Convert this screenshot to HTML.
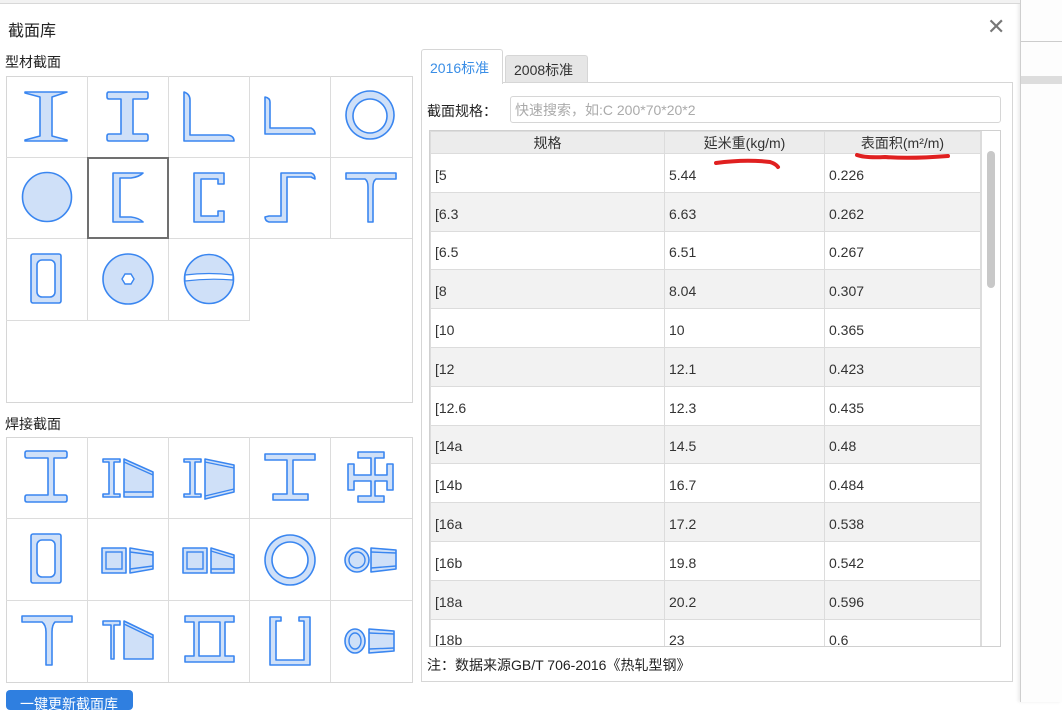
<!DOCTYPE html>
<html><head><meta charset="utf-8"><style>
*{margin:0;padding:0;box-sizing:border-box}
body{width:1062px;height:702px;overflow:hidden;background:#fff;font-family:"Liberation Sans","Noto Sans CJK SC",sans-serif;position:relative;color:#333}
.abs{position:absolute}
.outer{left:1020px;top:0;width:42px;height:702px;background:#fdfdfd;border-left:1px solid #cfcfcf;box-shadow:-2px 0 3px rgba(0,0,0,.08)}
.t{font-size:13px;color:#222}
table{border-collapse:collapse;font-size:14px}
td{border:1px solid #dcdcdc;padding:0 4px;height:38.8px;vertical-align:bottom;padding-bottom:9px}
tr:nth-child(odd) td{background:#f2f2f2}
svg .s{fill:#cfe0f8;stroke:#3a86f0;stroke-width:1.6;stroke-linejoin:round}
svg .l{fill:none;stroke:#3a86f0;stroke-width:1.4}
</style></head><body>
<div class="abs outer"></div>
<div class="abs" style="left:1021px;top:41px;width:41px;height:1px;background:#ccc"></div>
<div class="abs" style="left:1021px;top:76px;width:41px;height:8px;background:#ddd"></div>
<div class="abs" style="left:0;top:0;width:1020px;height:4px;background:#f2f2f2;border-bottom:1px solid #d8d8d8"></div>
<div class="abs" style="left:8px;top:17px;font-size:16px;color:#222">截面库</div>
<div class="abs" style="left:987px;top:16px;font-size:22px;color:#777;line-height:22px">✕</div>
<div class="abs t" style="left:5px;top:52px;font-size:14px">型材截面</div>
<div class="abs t" style="left:5px;top:414px;font-size:14px">焊接截面</div>

<svg class="abs" style="left:0;top:0" width="420" height="702">
<rect x="6.5" y="76.5" width="406" height="326" fill="#fff" stroke="#d6d6d6"/>
<g stroke="#dcdcdc" fill="none">
<path d="M87.5 76V320M168.5 76V320M249.5 76V320M330.5 76V238M6 157.5H412M6 238.5H412M6 320.5H250M249.5 238V320"/>
</g>
<rect x="88" y="158" width="80" height="80" fill="none" stroke="#707070" stroke-width="2"/>
<g transform="translate(6,76)"><path class="s" d="M19,16H61L46,21V60L61,64V65H19V64L34,60V21L19,17Z"/></g>
<g transform="translate(87,76)"><path class="s" d="M21,16H60Q61,16 61,18V21Q61,23 59,23H46V58H59Q61,58 61,60V63Q61,65 59,65H22Q20,65 20,63V60Q20,58 22,58H34V23H22Q20,23 20,21V18Q20,16 22,16Z"/></g>
<g transform="translate(168,76)"><path class="s" d="M16,16Q22,18 22,24V59H60Q66,60 66,65H16Z"/></g>
<g transform="translate(249,76)"><path class="s" d="M16,21Q21,22 21,26V52H62Q66,54 66,58H16Z"/></g>
<g transform="translate(330,76)"><path class="s" fill-rule="evenodd" d="M40,15a24,24 0 1,0 0.01,0ZM40,23a17,17 0 1,1 -0.01,0Z"/></g>
<g transform="translate(6,157)"><circle class="s" cx="41" cy="40" r="24.5"/></g>
<g transform="translate(87,157)"><path class="s" d="M26,16H56Q52,20 44,21H33V60H44Q52,61 56,65H26Z"/></g>
<g transform="translate(168,157)"><path class="s" d="M26,16H56V27H50V22H33V59H50V54H56V65H26Z"/></g>
<g transform="translate(249,157)"><path class="s" d="M32,16H62Q66,17 66,22L62,20H38V65H20Q16,64 16,60L20,59H32Z"/></g>
<g transform="translate(330,157)"><path class="s" d="M16,16H66V22H46Q43,24 43,30V65H38V30Q38,24 35,22H16Z"/></g>
<g transform="translate(6,238)"><rect class="s" x="25" y="16" width="30" height="49" rx="2"/><rect x="31" y="22" width="18" height="37" rx="5" fill="#fff" stroke="#3a86f0" stroke-width="1.6"/></g>
<g transform="translate(87,238)"><circle class="s" cx="41" cy="41" r="25"/><path d="M35,41L38,36H44L47,41L44,46H38Z" fill="#fff" stroke="#3a86f0" stroke-width="1.4"/></g>
<g transform="translate(168,238)"><circle class="s" cx="41" cy="41" r="24.5"/><path d="M17,37Q41,34 65,37V42Q41,40 17,43Z" fill="#fff" stroke="#3a86f0" stroke-width="1.2"/></g>

<rect x="6.5" y="437.5" width="406" height="245" fill="#fff" stroke="#d6d6d6"/>
<g stroke="#dcdcdc" fill="none"><path d="M87.5 437V682M168.5 437V682M249.5 437V682M330.5 437V682M6 518.5H412M6 600.5H412"/></g>
<g transform="translate(6,437)"><path class="s" d="M21,14H59Q61,14 61,16V19Q61,21 59,21H48V58H59Q61,58 61,60V63Q61,65 59,65H21Q19,65 19,63V60Q19,58 21,58H42V21H21Q19,21 19,19V16Q19,14 21,14Z"/></g>
<g transform="translate(87,437)"><path class="s" d="M16,22H33V25H27V57H33V60H16V57H22V25H16Z"/><path class="s" d="M37,22L66,35V60H37Z"/><path class="l" d="M37,25L66,38M37,55H66"/></g>
<g transform="translate(168,437)"><path class="s" d="M16,22H33V25H27V57H33V60H16V57H22V25H16Z"/><path class="s" d="M37,22L66,28V55L37,62Z"/><path class="l" d="M37,25L66,31M37,59L66,52"/></g>
<g transform="translate(249,437)"><path class="s" d="M16,17H66V23H44V57H59V63H24V57H38V23H16Z"/></g>
<g transform="translate(330,437)"><path class="s" d="M28,15H54V21H45V38H57V27H63V53H57V44H45V59H54V65H28V59H41V44H24V53H18V27H24V38H41V21H28Z"/></g>
<g transform="translate(6,518)"><rect class="s" x="25" y="16" width="30" height="49" rx="2"/><rect x="31" y="22" width="18" height="37" rx="5" fill="#fff" stroke="#3a86f0" stroke-width="1.6"/></g>
<g transform="translate(87,518)"><rect class="s" x="15" y="30" width="24" height="25"/><rect class="l" x="19" y="34" width="16" height="17"/><path class="s" d="M43,30L66,34V51L43,55Z"/><path class="l" d="M43,34L66,37M43,51L66,48"/></g>
<g transform="translate(168,518)"><rect class="s" x="15" y="30" width="24" height="25"/><rect class="l" x="19" y="34" width="16" height="17"/><path class="s" d="M43,30L66,37V55H43Z"/><path class="l" d="M43,33L66,40M43,51H66"/></g>
<g transform="translate(249,518)"><path class="s" fill-rule="evenodd" d="M41,17a25,25 0 1,0 0.01,0ZM41,24a18,18 0 1,1 -0.01,0Z"/></g>
<g transform="translate(330,518)"><circle class="s" cx="27" cy="42" r="12"/><circle class="l" cx="27" cy="42" r="8"/><path class="s" d="M41,30L66,32V51L41,54Z"/><path class="l" d="M41,34L66,35M41,50L66,48"/></g>
<g transform="translate(6,600)"><path class="s" d="M16,16H66V22H49Q46,25 46,32V65H40V32Q40,25 36,22H16Z"/></g>
<g transform="translate(87,600)"><path class="s" d="M16,21H33V25H27V59H24V25H16Z"/><path class="s" d="M37,21L66,35V59H37Z"/><path class="l" d="M37,24L66,38"/></g>
<g transform="translate(168,600)"><path class="s" d="M17,16H66V22H57V56H66V62H17V56H26V22H17ZM31,22V56H52V22Z" fill-rule="evenodd"/></g>
<g transform="translate(249,600)"><path class="s" d="M21,17H32V21H27V60H55V21H50V17H61V65H21Z"/></g>
<g transform="translate(330,600)"><ellipse class="s" cx="25" cy="41" rx="10" ry="12"/><ellipse class="l" cx="25" cy="41" rx="6" ry="8"/><path class="s" d="M39,29L64,31V51L39,53Z"/><path class="l" d="M39,33L64,34M39,49L64,48"/></g>
</svg>

<div class="abs" style="left:6px;top:690px;width:127px;height:20px;background:#2f7fe0;border-radius:4px;color:#fff;font-size:14px;padding:4px 0 0 14px;overflow:hidden">一键更新截面库</div>

<div class="abs" style="left:421px;top:82px;width:592px;height:600px;border:1px solid #d6d6d6"></div>
<div class="abs" style="left:421px;top:49px;width:82px;height:35px;background:#fff;border:1px solid #d6d6d6;border-bottom:none;border-radius:3px 3px 0 0;color:#3a8ee6;font-size:14px;padding:8px 0 0 8px">2016标准</div>
<div class="abs" style="left:505px;top:55px;width:83px;height:27px;background:#e6e6e6;border:1px solid #d6d6d6;border-bottom:none;border-radius:3px 3px 0 0;color:#333;font-size:14px;padding:4px 0 0 8px">2008标准</div>
<div class="abs t" style="left:427px;top:101px;font-size:14px">截面规格：</div>
<div class="abs" style="left:510px;top:96px;width:491px;height:27px;border:1px solid #d6d6d6;border-radius:3px;color:#aaa;font-size:14px;padding:3px 0 0 4px">快速搜索，如:C 200*70*20*2</div>

<div class="abs" style="left:429px;top:130px;width:572px;height:517px;border:1px solid #d0d0d0;overflow:hidden">
<table style="width:551px">
<tr><td style="width:234px;height:22px;background:#ececec;text-align:center;padding:0;vertical-align:middle">规格</td><td style="width:160px;height:22px;background:#ececec;text-align:center;padding:0;vertical-align:middle">延米重(kg/m)</td><td style="height:22px;background:#ececec;text-align:center;padding:0;vertical-align:middle">表面积(m²/m)</td></tr>
<tr><td>[5</td><td>5.44</td><td>0.226</td></tr>
<tr><td>[6.3</td><td>6.63</td><td>0.262</td></tr>
<tr><td>[6.5</td><td>6.51</td><td>0.267</td></tr>
<tr><td>[8</td><td>8.04</td><td>0.307</td></tr>
<tr><td>[10</td><td>10</td><td>0.365</td></tr>
<tr><td>[12</td><td>12.1</td><td>0.423</td></tr>
<tr><td>[12.6</td><td>12.3</td><td>0.435</td></tr>
<tr><td>[14a</td><td>14.5</td><td>0.48</td></tr>
<tr><td>[14b</td><td>16.7</td><td>0.484</td></tr>
<tr><td>[16a</td><td>17.2</td><td>0.538</td></tr>
<tr><td>[16b</td><td>19.8</td><td>0.542</td></tr>
<tr><td>[18a</td><td>20.2</td><td>0.596</td></tr>
<tr><td>[18b</td><td>23</td><td>0.6</td></tr>
</table>
<div class="abs" style="left:551px;top:0;width:20px;height:517px;background:#fff;border-left:1px solid #dcdcdc"></div>
<div class="abs" style="left:557px;top:20px;width:8px;height:137px;background:#c8c8c8;border-radius:4px"></div>
</div>
<svg class="abs" style="left:700px;top:145px" width="260" height="30"><path d="M16,18Q45,14 70,17Q76,19 78,22" fill="none" stroke="#e02020" stroke-width="4" stroke-linecap="round"/><path d="M157,10Q165,13 185,12Q210,14 248,11" fill="none" stroke="#e02020" stroke-width="4" stroke-linecap="round"/></svg>
<div class="abs t" style="left:427px;top:655px;font-size:14px">注：数据来源GB/T 706-2016《热轧型钢》</div>
</body></html>
